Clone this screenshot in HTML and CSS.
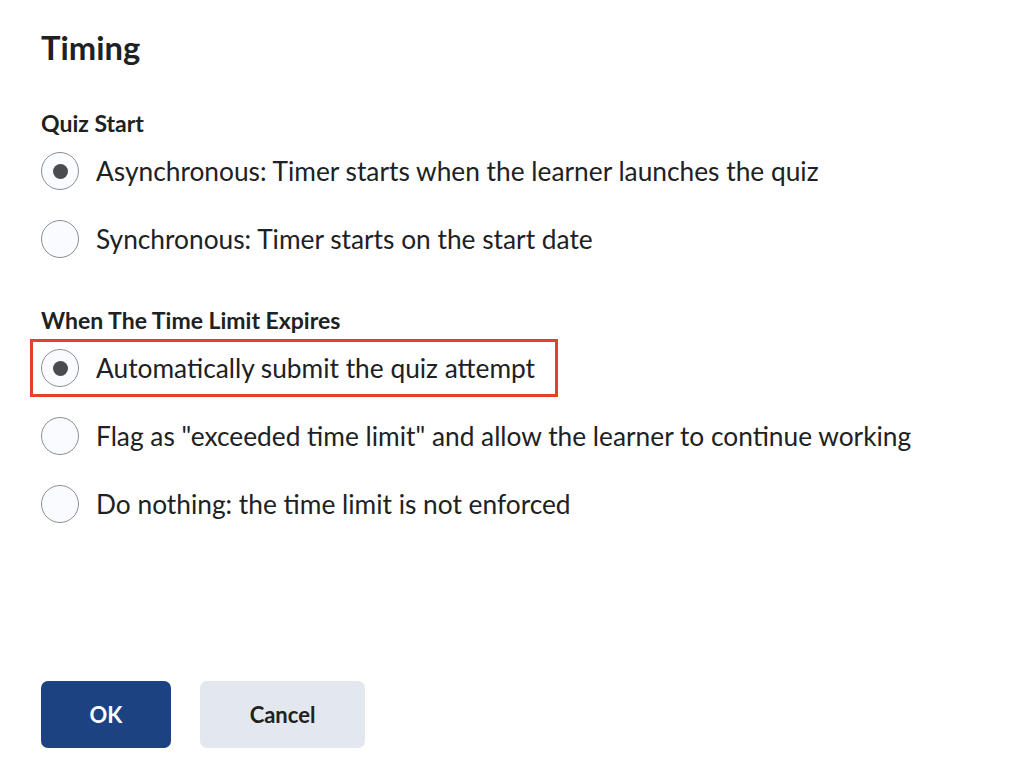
FILE: index.html
```html
<!DOCTYPE html>
<html lang="en">
<head>
<meta charset="utf-8">
<title>Timing</title>
<link rel="stylesheet" href="styles.css">
</head>
<body>
<main class="dialog">
  <h1 class="title">Timing</h1>

  <section class="group group-first" role="radiogroup" aria-label="Quiz Start">
    <div class="group-label">Quiz Start</div>
    <div class="options">
      <label class="option">
        <span class="radio checked"></span>
        <span class="option-text">Asynchronous: Timer starts when the learner launches the quiz</span>
      </label>
      <label class="option">
        <span class="radio"></span>
        <span class="option-text">Synchronous: Timer starts on the start date</span>
      </label>
    </div>
  </section>

  <section class="group group-second" role="radiogroup" aria-label="When The Time Limit Expires">
    <div class="group-label">When The Time Limit Expires</div>
    <div class="options">
      <div class="highlight">
        <label class="option">
          <span class="radio checked"></span>
          <span class="option-text">Automatically submit the quiz attempt</span>
        </label>
      </div>
      <label class="option">
        <span class="radio"></span>
        <span class="option-text">Flag as "exceeded time limit" and allow the learner to continue working</span>
      </label>
      <label class="option">
        <span class="radio"></span>
        <span class="option-text">Do nothing: the time limit is not enforced</span>
      </label>
    </div>
  </section>

  <div class="actions">
    <button class="btn btn-primary" type="button">OK</button>
    <button class="btn btn-secondary" type="button">Cancel</button>
  </div>
</main>
</body>
</html>
```

FILE: styles.css
```css
html, body {
  margin: 0;
  padding: 0;
  background: #ffffff;
}

body {
  font-family: Lato, "Open Sans", "Liberation Sans", sans-serif;
  color: #202122;
}

.dialog {
  padding: 28px 41px 0 41px;
  display: flex;
  flex-direction: column;
}

.title {
  margin: 0;
  font-size: 32.7px;
  line-height: 40px;
  font-weight: 700;
}

.group {
  display: flex;
  flex-direction: column;
  gap: 15px;
}

.group-first {
  margin-top: 41px;
}

.group-second {
  margin-top: 48px;
  gap: 15px;
}

.group-label {
  font-size: 23px;
  line-height: 28px;
  font-weight: 700;
}

.options {
  display: flex;
  flex-direction: column;
  gap: 30px;
}

.option {
  display: flex;
  align-items: center;
  gap: 17px;
  height: 38px;
  font-size: 26.3px;
  line-height: 32px;
}

.radio {
  box-sizing: border-box;
  width: 38px;
  height: 38px;
  flex: 0 0 38px;
  border-radius: 50%;
  border: 1.5px solid #8a8f94;
  background: #f9fbff;
  display: flex;
  align-items: center;
  justify-content: center;
}

.radio.checked::after {
  content: "";
  width: 15px;
  height: 15px;
  border-radius: 50%;
  background: #494c4e;
}

.highlight {
  align-self: flex-start;
  border: 3px solid #e5412a;
  padding: 7px 20px 7px 8px;
  margin: -10px 0 -10px -11px;
}

.actions {
  margin-top: 158px;
  display: flex;
  gap: 29px;
}

.btn {
  height: 67px;
  border: 0;
  border-radius: 7px;
  font-family: Lato, "Open Sans", "Liberation Sans", sans-serif;
  font-size: 22px;
  font-weight: 700;
  padding: 0;
}

.btn-primary {
  width: 130px;
  background: #1c4282;
  color: #ffffff;
}

.btn-secondary {
  width: 165px;
  background: #e3e8ef;
  color: #202122;
}
```
